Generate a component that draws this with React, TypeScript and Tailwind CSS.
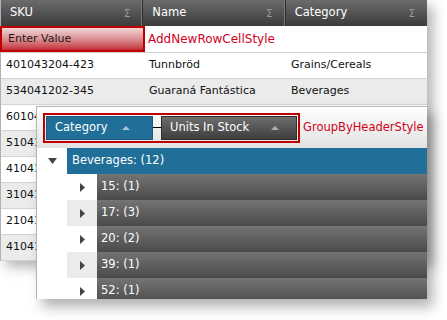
import React from 'react'

const font = { fontFamily: '"DejaVu Sans", Verdana, sans-serif' }

const rows = [
  { sku: '401043204-423', name: 'Tunnbröd', cat: 'Grains/Cereals' },
  { sku: '534041202-345', name: 'Guaraná Fantástica', cat: 'Beverages' },
]

// rows that sit behind the child band: only their SKU start shows
const hiddenRows = ['60104', '51041', '41041', '31041', '21041', '41041']

const children = ['15: (1)', '17: (3)', '20: (2)', '39: (1)', '52: (1)']

const Tri: React.FC<{ dir: 'up' | 'down' | 'right'; color: string; w: number; h: number }> = ({ dir, color, w, h }) => {
  const pts =
    dir === 'up' ? `0,${h} ${w},${h} ${w / 2},0` : dir === 'down' ? `0,0 ${w},0 ${w / 2},${h}` : `0,0 ${w},${h / 2} 0,${h}`
  return (
    <svg width={w} height={h} viewBox={`0 0 ${w} ${h}`}>
      <polygon points={pts} fill={color} />
    </svg>
  )
}

const HeaderCell: React.FC<{ label: string; last?: boolean }> = ({ label, last }) => (
  <div
    className={`flex-1 flex items-center justify-between pl-[9px] pr-[12px] text-[11.5px] text-white ${
      last ? '' : 'border-r border-[#2e2e2e] shadow-[inset_-2px_0_0_-1px_#7a7a7a]'
    }`}
  >
    <span>{label}</span>
    <span className="text-[10px] text-[#9a9a9a]">Σ</span>
  </div>
)

export default function App() {
  return (
    <div className="w-[447px] h-[320px] bg-white overflow-hidden" style={font}>
      <div className="relative w-[427px]">
        {/* grid */}
        <div className="shadow-[6px_6px_12px_rgba(0,0,0,0.3)] border-l border-[#b0b0b0]">
          <div className="flex h-[26px] bg-gradient-to-b from-[#6c6c6c] to-[#3c3c3c]">
            <HeaderCell label="SKU" />
            <HeaderCell label="Name" />
            <HeaderCell label="Category" last />
          </div>

          {/* add new row */}
          <div className="flex h-[27px] border-b border-[#cfcfcf] bg-white text-[11px]">
            <div className="w-[145px] -ml-px border-2 border-[#c00000] bg-gradient-to-b from-[#f0d6d6] via-[#dc9094] to-[#c0283a] flex items-center pl-[6px] text-[#1a1a1a]">
              Enter Value
            </div>
            <div className="flex items-center pl-[3px] text-[12px] text-[#d0021b]">AddNewRowCellStyle</div>
          </div>

          {rows.map((r, i) => (
            <div
              key={r.sku}
              className={`flex h-[26px] items-center border-b border-[#d4d4d4] text-[11px] text-[#111] ${
                i % 2 === 0 ? 'bg-white' : 'bg-[#ebebeb]'
              }`}
            >
              <div className="w-[143px] pl-[5px]">{r.sku}</div>
              <div className="w-[142px] pl-[5px]">{r.name}</div>
              <div className="flex-1 pl-[5px]">{r.cat}</div>
            </div>
          ))}

          {hiddenRows.map((sku, i) => (
            <div
              key={i}
              className={`flex h-[26px] items-center border-b border-[#d4d4d4] text-[11px] text-[#111] ${
                i % 2 === 0 ? 'bg-white' : 'bg-[#ebebeb]'
              }`}
            >
              <div className="pl-[5px] whitespace-nowrap">{sku}</div>
            </div>
          ))}
        </div>

        {/* child band overlay */}
        <div className="absolute left-[36px] top-[106px] w-[391px] h-[193px] bg-white border-l border-t border-[#b4b4b4] shadow-[6px_8px_12px_rgba(0,0,0,0.3)] overflow-hidden">
          <div className="h-[41px] flex items-center pl-[6px] bg-gradient-to-b from-white to-[#e2e2e2]">
            <div className="flex items-center border-2 border-[#c00000] p-px">
              <div className="flex items-center w-[107px] h-[24px] pl-[8px] gap-[14px] bg-[#206f98] border border-[#185a7c] text-white text-[11.5px]">
                <span>Category</span>
                <Tri dir="up" color="#a9c4d4" w={8} h={4} />
              </div>
              <div className="w-[8px] h-px bg-black" />
              <div className="flex items-center w-[136px] h-[24px] pl-[8px] gap-[22px] bg-gradient-to-b from-[#6e6e6e] to-[#3e3e3e] border border-[#2c2c2c] text-white text-[11.5px]">
                <span>Units In Stock</span>
                <Tri dir="up" color="#b0b0b0" w={8} h={4} />
              </div>
            </div>
            <span className="ml-[3px] text-[11.5px] text-[#d0021b]">GroupByHeaderStyle</span>
          </div>

          <div className="flex h-[26px]">
            <div className="w-[30px] flex items-center justify-center">
              <Tri dir="down" color="#444" w={9} h={6} />
            </div>
            <div className="flex-1 flex items-center pl-[5px] bg-[#206f98] text-white text-[11.5px]">Beverages: (12)</div>
          </div>

          {children.map((c, i) => (
            <div key={c} className="flex h-[26px]">
              <div className="w-[30px]" />
              <div
                className={`w-[30px] flex items-center justify-center ${i % 2 === 1 ? 'bg-[#ebebeb]' : 'bg-white'}`}
              >
                <Tri dir="right" color="#444" w={5} h={9} />
              </div>
              <div className="flex-1 flex items-center pl-[4px] border-b border-[#4a4a4a] bg-gradient-to-b from-[#747474] to-[#4c4c4c] text-white text-[11.5px]">
                {c}
              </div>
            </div>
          ))}
        </div>
      </div>
    </div>
  )
}
